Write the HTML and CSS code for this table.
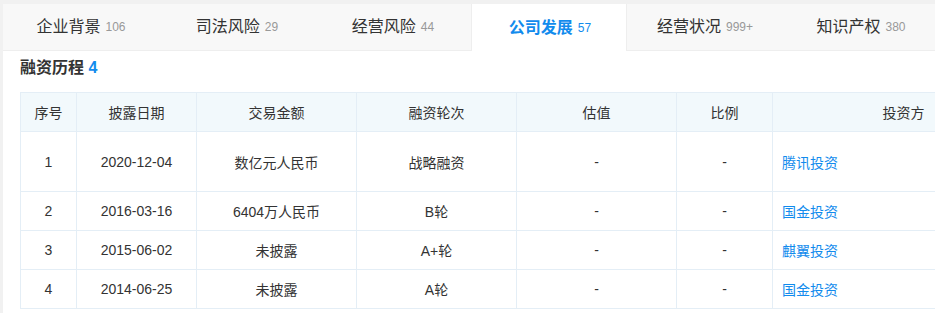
FILE: index.html
```html
<!DOCTYPE html>
<html lang="zh">
<head>
<meta charset="utf-8">
<link rel="stylesheet" href="styles.css">
</head>
<body>
<div class="page">
  <nav class="tabs">
    <div class="tab">企业背景<span class="cnt">106</span></div>
    <div class="tab">司法风险<span class="cnt">29</span></div>
    <div class="tab">经营风险<span class="cnt">44</span></div>
    <div class="tab active">公司发展<span class="cnt">57</span></div>
    <div class="tab">经营状况<span class="cnt">999+</span></div>
    <div class="tab">知识产权<span class="cnt">380</span></div>
  </nav>
  <section class="content">
    <h2 class="title">融资历程 <span class="num">4</span></h2>
    <div class="tbl-wrap">
    <table class="tbl">
      <colgroup>
        <col class="c1"><col class="c2"><col class="c3"><col class="c4"><col class="c5"><col class="c6"><col class="c7">
      </colgroup>
      <thead>
        <tr><th>序号</th><th>披露日期</th><th>交易金额</th><th>融资轮次</th><th>估值</th><th>比例</th><th>投资方</th></tr>
      </thead>
      <tbody>
        <tr class="tall"><td>1</td><td>2020-12-04</td><td>数亿元人民币</td><td>战略融资</td><td>-</td><td>-</td><td class="inv"><a>腾讯投资</a></td></tr>
        <tr><td>2</td><td>2016-03-16</td><td>6404万人民币</td><td>B轮</td><td>-</td><td>-</td><td class="inv"><a>国金投资</a></td></tr>
        <tr><td>3</td><td>2015-06-02</td><td>未披露</td><td>A+轮</td><td>-</td><td>-</td><td class="inv"><a>麒翼投资</a></td></tr>
        <tr><td>4</td><td>2014-06-25</td><td>未披露</td><td>A轮</td><td>-</td><td>-</td><td class="inv"><a>国金投资</a></td></tr>
      </tbody>
    </table>
    </div>
  </section>
</div>
</body>
</html>
```

FILE: styles.css
```css
html, body {
  margin: 0;
  padding: 0;
  overflow: hidden;
  background: #fff;
}
body {
  font-family: "Liberation Sans", Arial, "Noto Sans CJK SC", sans-serif;
  color: #333;
  width: 935px;
  height: 313px;
}
.page {
  border-top: 4px solid #f1f1f1;
  border-left: 3px solid #f1f1f1;
  height: 100%;
  box-sizing: border-box;
  overflow: hidden;
}
.tabs {
  display: flex;
  height: 46px;
  background: #f8f8f8;
  border-bottom: 1px solid #eeeeee;
}
.tab {
  flex: 0 0 156px;
  display: flex;
  align-items: center;
  justify-content: center;
  font-size: 16px;
  line-height: 46px;
  color: #333;
  box-sizing: border-box;
}
.tab .cnt {
  font-size: 12px;
  color: #999;
  margin-left: 5px;
  font-family: "Liberation Sans", Arial, sans-serif;
}
.tab.active {
  background: #fff;
  color: #128bed;
  font-weight: bold;
  border-left: 1px solid #eeeeee;
  border-right: 1px solid #eeeeee;
  height: 47px;
  padding-left: 2px;
}
.tab.active .cnt {
  color: #128bed;
  font-weight: normal;
}
.content {
  padding: 7px 0 0 17px;
}
.title {
  margin: 0;
  font-size: 16px;
  line-height: 20px;
  font-weight: bold;
  color: #333;
}
.title .num {
  color: #128bed;
}
.tbl-wrap {
  margin-top: 14px;
  overflow: hidden;
}
.tbl {
  border-collapse: collapse;
  table-layout: fixed;
  width: 1014px;
  font-size: 14px;
}
.c1 { width: 56px; }
.c2 { width: 120px; }
.c3 { width: 160px; }
.c4 { width: 160px; }
.c5 { width: 160px; }
.c6 { width: 96px; }
.c7 { width: 262px; }
.tbl th, .tbl td {
  border: 1px solid #e4eef6;
  text-align: center;
  vertical-align: middle;
  padding: 0 8px;
  color: #333;
  font-weight: normal;
  white-space: nowrap;
}
.tbl th {
  background: #f2f9fc;
  height: 38px;
}
.tbl td {
  height: 38px;
}
.tbl tr.tall td {
  height: 59px;
}
.tbl td.inv {
  text-align: left;
  padding-left: 9px;
}
.tbl td.inv a {
  color: #128bed;
  text-decoration: none;
}
```
